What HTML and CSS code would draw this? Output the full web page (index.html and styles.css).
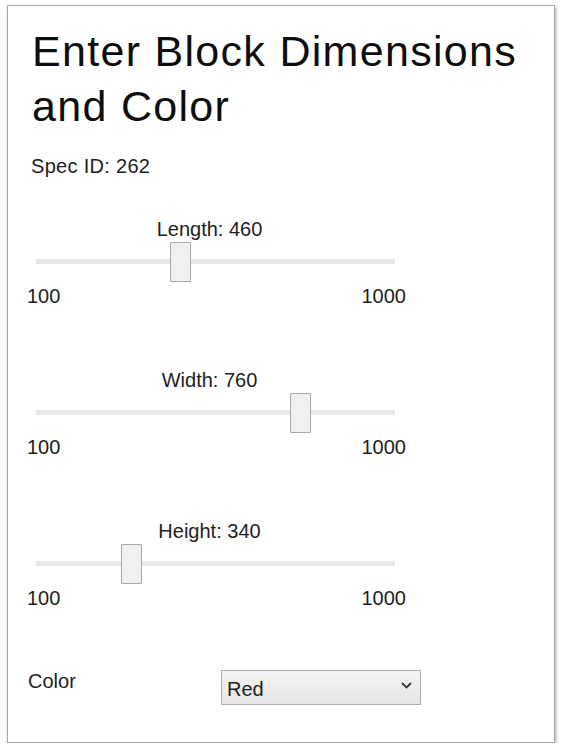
FILE: index.html
```html
<!DOCTYPE html>
<html lang="en">
<head>
    <meta charset="UTF-8">
    <meta name="viewport" content="width=device-width, initial-scale=1.0">
    <title>Block Spec</title>
    <link rel="stylesheet" href="styles.css">
</head>
<body>
    <div class="panel">
        <h1 class="title">Enter Block Dimensions and Color</h1>
        <div class="spec-id">Spec ID: 262</div>

        <div class="slider">
            <div class="slider-label">Length: 460</div>
            <div class="slider-area">
                <div class="slider-track"></div>
                <div class="slider-thumb" style="left: 143px"></div>
            </div>
            <div class="slider-ends"><span>100</span><span>1000</span></div>
        </div>

        <div class="slider">
            <div class="slider-label">Width: 760</div>
            <div class="slider-area">
                <div class="slider-track"></div>
                <div class="slider-thumb" style="left: 263px"></div>
            </div>
            <div class="slider-ends"><span>100</span><span>1000</span></div>
        </div>

        <div class="slider">
            <div class="slider-label">Height: 340</div>
            <div class="slider-area">
                <div class="slider-track"></div>
                <div class="slider-thumb" style="left: 94px"></div>
            </div>
            <div class="slider-ends"><span>100</span><span>1000</span></div>
        </div>

        <div class="color-row">
            <div class="color-label">Color</div>
            <div class="dropdown">
                <span class="dropdown-value">Red</span>
                <svg class="dropdown-arrow" width="11" height="7" viewBox="0 0 11 7">
                    <polyline points="1,1 5.5,5.5 10,1" fill="none" stroke="#3a3a3a" stroke-width="1.8"/>
                </svg>
            </div>
        </div>
    </div>
</body>
</html>
```

FILE: styles.css
```css
* {
    margin: 0;
    padding: 0;
    box-sizing: border-box;
}

body {
    background-color: #ffffff;
    color: #1e1e1e;
    font-family: 'Liberation Sans', Arial, sans-serif;
}

.panel {
    width: 548px;
    height: 738px;
    margin: 5px 0 0 7px;
    padding: 18px 0 0 19px;
    border: 1px solid #a8a8a8;
    box-shadow: 1px 2px 3px rgba(0, 0, 0, 0.35);
    background-color: #ffffff;
}

.title {
    margin-left: 5px;
    font-size: 43px;
    font-weight: normal;
    line-height: 55px;
    letter-spacing: 1.3px;
    color: #0e0e0e;
}

.spec-id {
    margin: 20px 0 0 4px;
    font-size: 20px;
    line-height: 24px;
    letter-spacing: 0.3px;
}

.slider {
    width: 379px;
    margin-top: 39px;
}

.slider + .slider {
    margin-top: 60px;
}

.slider-label {
    padding-right: 14px;
    text-align: center;
    font-size: 20px;
    line-height: 24px;
}

.slider-area {
    position: relative;
    height: 41px;
    display: flex;
    align-items: center;
}

.slider-track {
    width: 359px;
    height: 5px;
    margin-left: 9px;
    background-color: #e7e7e7;
}

.slider-thumb {
    position: absolute;
    top: 1px;
    width: 21px;
    height: 40px;
    background-color: #f0f0f0;
    border: 1px solid #a9a9a9;
    border-radius: 1px;
}

.slider-ends {
    display: flex;
    justify-content: space-between;
    margin-top: 2px;
    font-size: 20px;
    line-height: 24px;
}

.color-row {
    display: grid;
    grid-template-columns: 194px 200px;
    align-items: start;
    margin-top: 59px;
}

.color-label {
    font-size: 20px;
    line-height: 24px;
    margin-left: 1px;
}

.dropdown {
    height: 35px;
    margin-top: 1px;
    display: flex;
    align-items: center;
    padding: 0 8px 0 5px;
    border: 1px solid #adadad;
    background: linear-gradient(#f3f3f3, #e6e6e6);
}

.dropdown-value {
    font-size: 20px;
    line-height: 24px;
    padding-top: 3px;
}

.dropdown-arrow {
    margin-left: auto;
    margin-top: -4px;
}
```
